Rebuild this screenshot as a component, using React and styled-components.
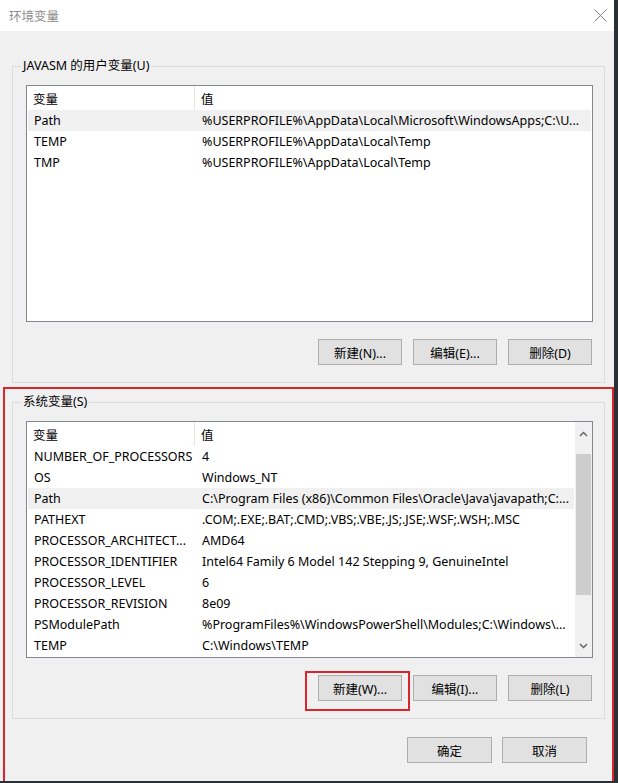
import React from "react";
import styled, { createGlobalStyle } from "styled-components";

const GlobalStyle = createGlobalStyle`
  html, body {
    margin: 0;
    padding: 0;
    background: #2b2f36;
    font-family: "Noto Sans", "Noto Sans CJK SC", sans-serif;
    font-size: 12.5px;
    color: #000;
  }
`;

const userVars = [
  ["Path", "%USERPROFILE%\\AppData\\Local\\Microsoft\\WindowsApps;C:\\U...", true],
  ["TEMP", "%USERPROFILE%\\AppData\\Local\\Temp"],
  ["TMP", "%USERPROFILE%\\AppData\\Local\\Temp"],
];

const systemVars = [
  ["NUMBER_OF_PROCESSORS", "4"],
  ["OS", "Windows_NT"],
  ["Path", "C:\\Program Files (x86)\\Common Files\\Oracle\\Java\\javapath;C:...", true],
  ["PATHEXT", ".COM;.EXE;.BAT;.CMD;.VBS;.VBE;.JS;.JSE;.WSF;.WSH;.MSC"],
  ["PROCESSOR_ARCHITECT...", "AMD64"],
  ["PROCESSOR_IDENTIFIER", "Intel64 Family 6 Model 142 Stepping 9, GenuineIntel"],
  ["PROCESSOR_LEVEL", "6"],
  ["PROCESSOR_REVISION", "8e09"],
  ["PSModulePath", "%ProgramFiles%\\WindowsPowerShell\\Modules;C:\\Windows\\..."],
  ["TEMP", "C:\\Windows\\TEMP"],
];

const VarList = ({ rows, scroll }) => (
  <ListBox>
    <ListBody>
      <HeaderRow>
        <NameCell>变量</NameCell>
        <HeaderDivider />
        <ValueCell>值</ValueCell>
      </HeaderRow>
      {rows.map(([name, value, hot]) => (
        <Row key={name + value} $hot={hot}>
          <NameCell>{name}</NameCell>
          <ValueCell>{value}</ValueCell>
        </Row>
      ))}
    </ListBody>
    {scroll && (
      <ScrollBar>
        <ScrollArrow>
          <svg width="9" height="6" viewBox="0 0 9 6">
            <polyline points="1,5 4.5,1.5 8,5" fill="none" stroke="#606060" strokeWidth="1.4" />
          </svg>
        </ScrollArrow>
        <ScrollTrack>
          <ScrollThumb />
        </ScrollTrack>
        <ScrollArrow>
          <svg width="9" height="6" viewBox="0 0 9 6">
            <polyline points="1,1 4.5,4.5 8,1" fill="none" stroke="#606060" strokeWidth="1.4" />
          </svg>
        </ScrollArrow>
      </ScrollBar>
    )}
  </ListBox>
);

const App = () => {
  return (
    <>
      <GlobalStyle />
      <Window>
        <TitleBar>
          <TitleText>环境变量</TitleText>
          <CloseIcon>
            <svg width="13" height="13" viewBox="0 0 13 13">
              <path d="M0.5 0.5 L12.5 12.5 M12.5 0.5 L0.5 12.5" stroke="#808080" strokeWidth="1" />
            </svg>
          </CloseIcon>
        </TitleBar>

        <Group $top={27}>
          <Legend>JAVASM 的用户变量(U)</Legend>
          <VarList rows={userVars} />
          <ButtonRow>
            <Button>新建(N)...</Button>
            <Button>编辑(E)...</Button>
            <Button>删除(D)</Button>
          </ButtonRow>
        </Group>

        <Highlight>
          <Group $top={5} $inset={7}>
            <Legend>系统变量(S)</Legend>
            <VarList rows={systemVars} scroll />
            <ButtonRow>
              <MarkedWrap>
                <Button>新建(W)...</Button>
                <Mark />
              </MarkedWrap>
              <Button>编辑(I)...</Button>
              <Button>删除(L)</Button>
            </ButtonRow>
          </Group>
          <DialogButtons>
            <Button $wide>确定</Button>
            <Button $wide>取消</Button>
          </DialogButtons>
        </Highlight>
      </Window>
    </>
  );
};

export default App;

const Window = styled.div`
  width: 614px;
  height: 781px;
  background: #f0f0f0;
  overflow: hidden;
  display: flex;
  flex-direction: column;
`;

const TitleBar = styled.div`
  height: 31px;
  flex: none;
  background: #fff;
  display: flex;
  align-items: center;
  justify-content: space-between;
  padding: 0 7px 0 9px;
`;

const TitleText = styled.span`
  color: #8c8c8c;
  font-size: 12.5px;
  margin-top: -1px;
`;

const CloseIcon = styled.span`
  display: flex;
  width: 13px;
  height: 13px;
  margin-right: 0;
  margin-top: -1px;
`;

const Group = styled.fieldset`
  margin: ${(p) => p.$top}px 0 0 ${(p) => p.$inset || 12}px;
  width: 593px;
  box-sizing: border-box;
  border: 1px solid #dcdcdc;
  padding: 0 11px 17px 13px;
  min-inline-size: 0;
`;

const Legend = styled.legend`
  margin-left: -5px;
  padding: 0 2px;
  line-height: 16px;
  font-size: 12.5px;
  margin-bottom: 11px;
`;

const ListBox = styled.div`
  height: 237px;
  box-sizing: border-box;
  border: 1px solid #828790;
  background: #fff;
  display: flex;
  overflow: hidden;
`;

const ListBody = styled.div`
  flex: 1;
  min-width: 0;
  display: flex;
  flex-direction: column;
`;

const HeaderRow = styled.div`
  height: 24px;
  flex: none;
  display: flex;
  align-items: center;
  position: relative;
`;

const HeaderDivider = styled.div`
  position: absolute;
  left: 167px;
  top: 0;
  bottom: 0;
  width: 1px;
  background: #e5e5e5;
`;

const Row = styled.div`
  height: 21px;
  flex: none;
  display: flex;
  align-items: center;
  margin: 0 1px;
  background: ${(p) => (p.$hot ? "#f0f0f0" : "transparent")};
`;

const NameCell = styled.div`
  width: 168px;
  flex: none;
  padding-left: 6px;
  box-sizing: border-box;
  white-space: nowrap;
  overflow: hidden;
`;

const ValueCell = styled.div`
  flex: 1;
  min-width: 0;
  padding-left: 6px;
  white-space: nowrap;
  overflow: hidden;
`;

const ScrollBar = styled.div`
  width: 17px;
  flex: none;
  background: #f0f0f0;
  display: flex;
  flex-direction: column;
`;

const ScrollArrow = styled.div`
  height: 17px;
  flex: none;
  display: flex;
  align-items: center;
  justify-content: center;
  margin: 3px 0;
`;

const ScrollTrack = styled.div`
  flex: 1;
  padding-top: 9px;
`;

const ScrollThumb = styled.div`
  height: 141px;
  margin: 0 1px;
  background: #cdcdcd;
`;

const ButtonRow = styled.div`
  display: flex;
  justify-content: flex-end;
  gap: 11px;
  margin-top: 17px;
  padding-right: 1px;
`;

const Button = styled.div`
  width: ${(p) => (p.$wide ? 85 : 84)}px;
  height: 26px;
  box-sizing: border-box;
  border: 1px solid #adadad;
  background: #e1e1e1;
  display: flex;
  align-items: center;
  justify-content: center;
  font-size: 12.5px;
  white-space: nowrap;
`;

const MarkedWrap = styled.div`
  position: relative;
`;

const Mark = styled.div`
  position: absolute;
  left: -13px;
  top: -4px;
  right: -8px;
  bottom: -10px;
  border: 2px solid #d9262a;
  pointer-events: none;
`;

const Highlight = styled.div`
  margin: 4px 0 0 3px;
  width: 611px;
  flex: 1;
  box-sizing: border-box;
  border: 2px solid #d9262a;
  border-bottom: none;
  padding-bottom: 40px;
`;

const DialogButtons = styled.div`
  display: flex;
  justify-content: flex-end;
  gap: 10px;
  margin-top: 18px;
  padding-right: 25px;
`;
